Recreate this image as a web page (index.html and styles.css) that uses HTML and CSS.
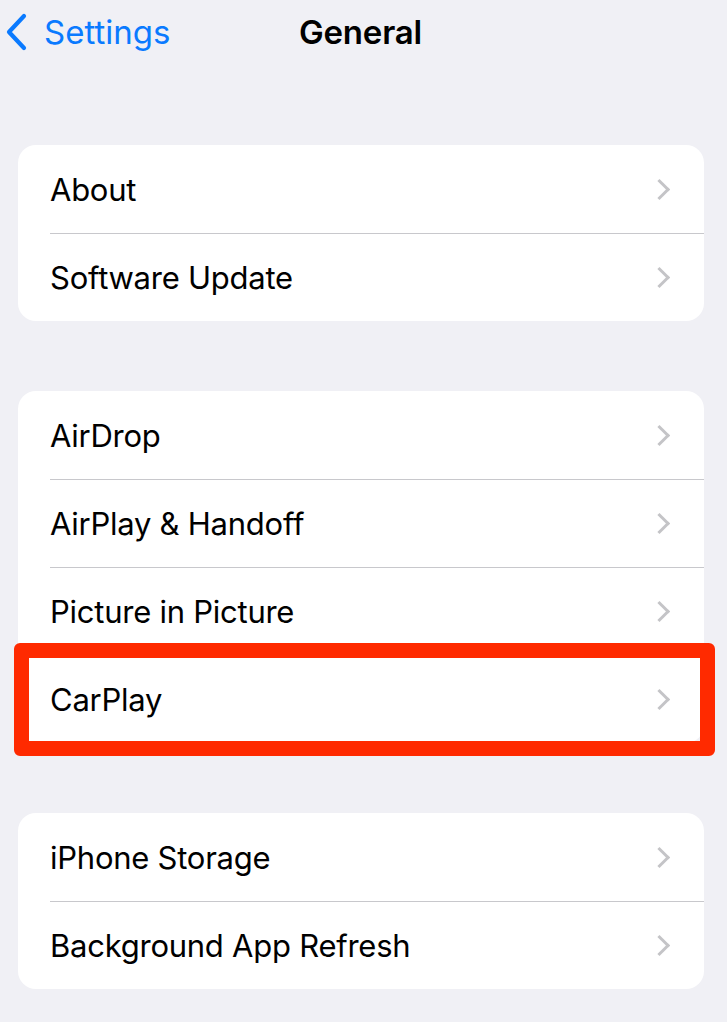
FILE: index.html
```html
<!DOCTYPE html>
<html lang="en">
<head>
    <meta charset="UTF-8">
    <meta name="viewport" content="width=device-width, initial-scale=1.0">
    <title>General</title>
    <link rel="stylesheet" href="styles.css">
</head>
<body>
    <header class="navbar">
        <a class="back" href="#">
            <svg class="back-icon" width="24" height="38" viewBox="0 0 24 38">
                <path d="M20 3 L5 19 L20 35" fill="none" stroke="currentColor" stroke-width="4.2" stroke-linecap="round" stroke-linejoin="round"/>
            </svg>
            <span>Settings</span>
        </a>
        <h1 class="title">General</h1>
        <div></div>
    </header>

    <main class="content">
        <ul class="group">
            <li class="row"><span>About</span><span class="chevron"></span></li>
            <li class="row"><span>Software Update</span><span class="chevron"></span></li>
        </ul>

        <ul class="group">
            <li class="row"><span>AirDrop</span><span class="chevron"></span></li>
            <li class="row"><span>AirPlay &amp; Handoff</span><span class="chevron"></span></li>
            <li class="row"><span>Picture in Picture</span><span class="chevron"></span></li>
            <li class="row highlighted"><span>CarPlay</span><span class="chevron"></span></li>
        </ul>

        <ul class="group">
            <li class="row"><span>iPhone Storage</span><span class="chevron"></span></li>
            <li class="row"><span>Background App Refresh</span><span class="chevron"></span></li>
        </ul>
    </main>
</body>
</html>
```

FILE: styles.css
```css
body {
    font-family: Inter, 'Liberation Sans', sans-serif;
    background-color: #f0f0f5;
    margin: 0;
    color: #000;
}

.navbar {
    display: grid;
    grid-template-columns: 1fr auto 1fr;
    align-items: center;
    height: 64px;
    padding-right: 6px;
}

.back {
    display: flex;
    align-items: center;
    gap: 16px;
    padding-left: 4px;
    color: #0a7aff;
    text-decoration: none;
    font-size: 33px;
}

.back-icon {
    display: block;
}

.title {
    margin: 0;
    font-size: 33px;
    font-weight: 600;
    letter-spacing: -0.2px;
}

.content {
    padding: 81px 23px 0 18px;
}

.group {
    list-style: none;
    margin: 0 0 70px;
    padding: 0;
    background-color: #fff;
    border-radius: 18px;
}

.row {
    position: relative;
    display: flex;
    justify-content: space-between;
    align-items: center;
    height: 88px;
    margin-left: 32px;
    padding-right: 35px;
    font-size: 31px;
    letter-spacing: -0.25px;
    border-top: 1px solid #c8c8cc;
    box-sizing: border-box;
}

.row:first-child {
    border-top: none;
}

.chevron {
    width: 12px;
    height: 12px;
    border-top: 3px solid #c4c4c7;
    border-right: 3px solid #c4c4c7;
    transform: rotate(45deg);
    margin-right: 2px;
}

.highlighted::after {
    content: "";
    position: absolute;
    top: -13px;
    bottom: -13px;
    left: -36px;
    right: -11px;
    border: 15px solid #ff2a00;
    border-radius: 6px;
}
```
